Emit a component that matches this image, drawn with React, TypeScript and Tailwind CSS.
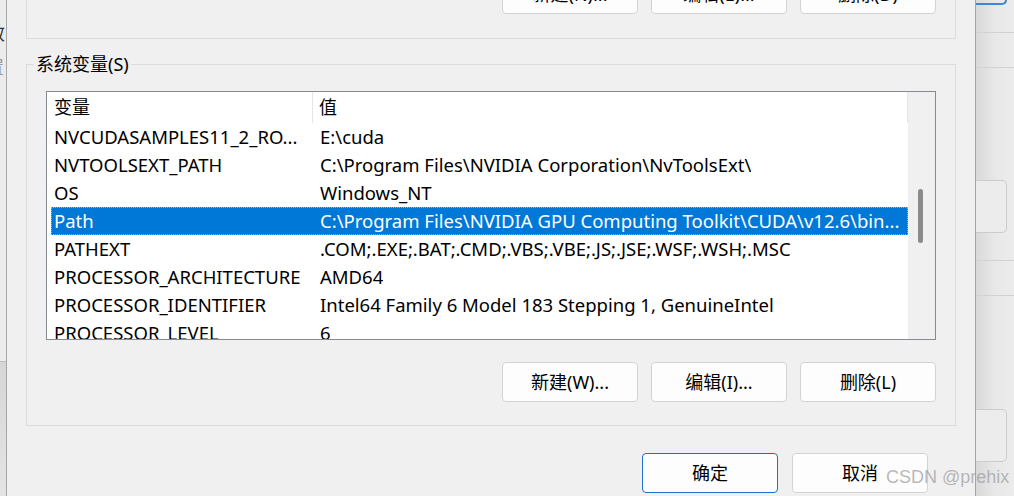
import React from "react";

const rows: [string, string][] = [
  ["NVCUDASAMPLES11_2_RO...", "E:\\cuda"],
  ["NVTOOLSEXT_PATH", "C:\\Program Files\\NVIDIA Corporation\\NvToolsExt\\"],
  ["OS", "Windows_NT"],
  ["Path", "C:\\Program Files\\NVIDIA GPU Computing Toolkit\\CUDA\\v12.6\\bin..."],
  ["PATHEXT", ".COM;.EXE;.BAT;.CMD;.VBS;.VBE;.JS;.JSE;.WSF;.WSH;.MSC"],
  ["PROCESSOR_ARCHITECTURE", "AMD64"],
  ["PROCESSOR_IDENTIFIER", "Intel64 Family 6 Model 183 Stepping 1, GenuineIntel"],
  ["PROCESSOR_LEVEL", "6"],
];

function Btn({ label, primary }: { label: string; primary?: boolean }) {
  return (
    <div
      className={
        "w-[136px] h-[40px] flex items-center justify-center rounded-[4px] bg-[#fdfdfd] text-[18px] text-black " +
        (primary ? "border border-[#1c6fc4]" : "border border-[#d3d3d3]")
      }
    >
      {label}
    </div>
  );
}

export default function App() {
  return (
    <div
      className="relative w-[1014px] h-[496px] flex overflow-hidden bg-[#f0f0f0] text-black"
      style={{ fontFamily: '"Noto Sans", "Noto Sans CJK SC", sans-serif' }}
    >
      {/* left background window strip */}
      <div className="w-[7px] h-full flex flex-col border-r border-[#a6a6a6] bg-[#ececec] overflow-hidden shrink-0">
        <div className="h-[362px] flex flex-col border-b border-[#bdbdbd]">
          <div className="mt-[20px] ml-[-13px] text-[18px] leading-[26px] text-[#333]">效</div>
          <div className="mt-[8px] ml-[-14px] text-[18px] leading-[26px] text-[#999]">置</div>
        </div>
        <div className="flex-1 bg-gradient-to-b from-[#d6d6d6] to-[#e4e4e4]" />
      </div>

      {/* dialog */}
      <div className="w-[968px] h-full shrink-0 flex flex-col bg-[#f0f0f0] pl-[19px] pr-[19px]">
        {/* top group (user variables) cut off */}
        <div className="h-[39px] shrink-0 border-x border-b border-[#dcdcdc] flex justify-end pr-[19px]">
          <div className="mt-[-26px] flex gap-[13px] h-[40px]">
            <Btn label="新建(N)..." />
            <Btn label="编辑(E)..." />
            <Btn label="删除(D)" />
          </div>
        </div>

        {/* system variables group */}
        <fieldset className="mt-[13px] h-[374px] shrink-0 border border-[#dcdcdc] m-0 p-0 min-w-0">
          <legend className="ml-[7px] px-[2px] text-[18px] leading-[24px]">系统变量(S)</legend>
          <div className="flex flex-col pl-[19px] pr-[19px]">
            <div className="mt-[15px] h-[249px] border border-[#868a91] bg-white flex overflow-hidden">
              <div className="flex-1 flex flex-col overflow-hidden">
                {/* header */}
                <div className="h-[31px] shrink-0 flex items-stretch text-[18px] border-r border-[#e5e5e5]">
                  <div className="w-[266px] pl-[7px] flex items-center border-r border-[#e5e5e5]">变量</div>
                  <div className="flex-1 pl-[6px] flex items-center">值</div>
                </div>
                {/* rows */}
                <div className="flex flex-col pl-[4px]">
                  {rows.map(([name, value], i) => {
                    const sel = i === 3;
                    return (
                      <div
                        key={name}
                        className={
                          "h-[28px] shrink-0 flex items-center text-[18.5px] whitespace-nowrap " +
                          (sel
                            ? "bg-[#0078d7] text-white border border-dotted border-[#f7a04a]"
                            : "border border-transparent")
                        }
                      >
                        <div className="w-[266px] pl-[2px] shrink-0 overflow-hidden">{name}</div>
                        <div className="pl-[2px] overflow-hidden">{value}</div>
                      </div>
                    );
                  })}
                </div>
              </div>
              {/* scrollbar */}
              <div className="w-[27px] shrink-0 bg-[#f0f0f0] flex flex-col pl-[10px]">
                <div className="mt-[97px] w-[5px] h-[54px] rounded-full bg-[#8a8a8a]" />
              </div>
            </div>
            <div className="mt-[22px] flex justify-end gap-[13px]">
              <Btn label="新建(W)..." />
              <Btn label="编辑(I)..." />
              <Btn label="删除(L)" />
            </div>
          </div>
        </fieldset>

        {/* OK / Cancel */}
        <div className="mt-[27px] flex justify-end gap-[14px] pr-[28px]">
          <Btn label="确定" primary />
          <Btn label="取消" />
        </div>
      </div>

      {/* right background window strip */}
      <div className="flex-1 h-full border-l border-[#a3a3a3] bg-gradient-to-r from-[#d9d9d9] via-[#e8e8e8] to-[#ececec] flex flex-col">
        <div className="h-[5px] w-[31px] border-b-2 border-r-2 border-[#3d86d8] rounded-br-[5px]" />
        <div className="mt-[27px] h-px bg-[#d2d2d2]" />
        <div className="mt-[34px] h-px bg-[#d2d2d2]" />
        <div className="mt-[112px] h-[53px] w-[31px] border border-l-0 border-[#cbcbcb] rounded-r-[5px] bg-[#ececec]" />
        <div className="mt-[27px] h-px bg-[#d2d2d2]" />
        <div className="mt-[34px] h-px bg-[#d2d2d2]" />
        <div className="mt-[113px] h-[53px] w-[31px] border border-l-0 border-[#cbcbcb] rounded-r-[5px] bg-[#ececec]" />
      </div>

      {/* watermark */}
      <div
        className="absolute left-[886px] top-[465px] text-[18px] leading-[24px] text-[#9a9a9a]/70 whitespace-nowrap"
        style={{ fontFamily: '"Liberation Sans", Arial, sans-serif' }}
      >
        CSDN @prehix
      </div>
    </div>
  );
}
